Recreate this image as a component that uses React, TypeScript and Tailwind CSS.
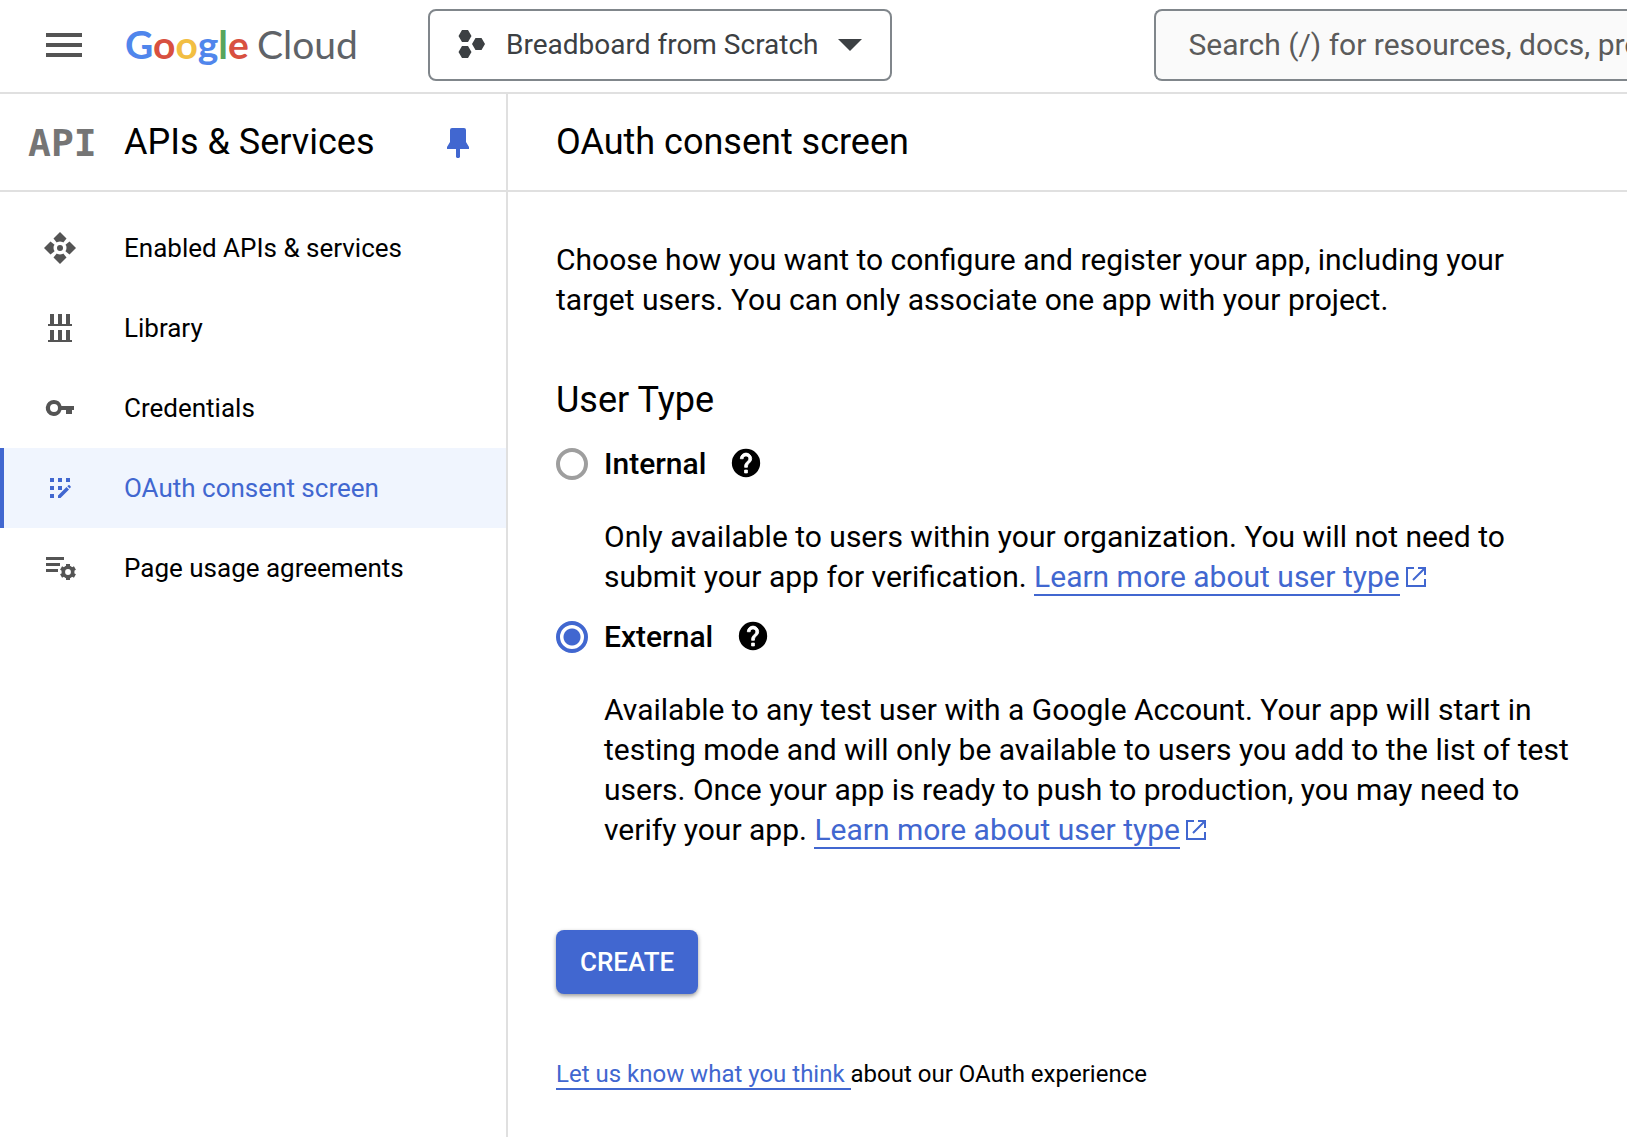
import React from "react";

const navItemBase = "flex h-20 items-center border-l-4 pl-[38px] text-[26px]";

function ApiNodesIcon() {
  return (
    <svg width="36" height="36" viewBox="0 0 36 36" fill="currentColor" aria-hidden="true">
      <mask id="hub">
        <rect width="36" height="36" fill="white" />
        <circle cx="18" cy="18" r="6.500" fill="black" />
      </mask>
      <g mask="url(#hub)">
        <path d="M18 2l6.500 6.500-4 5h-5l-4-5z" />
        <path d="M18 34l6.500-6.500-4-5h-5l-4 5z" />
        <path d="M2 18l6.500-6.500 5 4v5l-5 4z" />
        <path d="M34 18l-6.500-6.500-5 4v5l5 4z" />
      </g>
      <circle cx="18" cy="18" r="3" />
    </svg>
  );
}

function LibraryIcon() {
  return (
    <svg width="36" height="36" viewBox="0 0 36 36" fill="currentColor" aria-hidden="true">
      <path d="M8 4h4v10h4V4h4v10h4V4h4v10h2v2H6v-2h2z" />
      <path d="M8 20h4v10h4V20h4v10h4V20h4v10h2v2H6v-2h2z" />
    </svg>
  );
}

function KeyIcon() {
  return (
    <svg width="36" height="36" viewBox="0 0 36 36" fill="currentColor" aria-hidden="true">
      <path
        fillRule="evenodd"
        d="M12 10a8 8 0 1 0 7.500 10H24v4h6v-4h2v-4H19.500A8 8 0 0 0 12 10zm0 4a4 4 0 1 1 0 8 4 4 0 0 1 0-8z"
      />
    </svg>
  );
}

function ConsentIcon() {
  return (
    <svg width="36" height="36" viewBox="0 0 36 36" fill="currentColor" aria-hidden="true">
      <path d="M8 8h4v4H8zM16 8h4v4h-4zM24 8h4v4h-4zM8 16h4v4H8zM16 16h4v4h-4zM8 24h4v4H8z" />
      <path d="M16 28v-2.500l8.500-8.500 2.500 2.500-8.500 8.500zM25.300 16.200l1-1q.7-.4 1.300 0l1 1q.4.7 0 1.300l-.9 1z" />
    </svg>
  );
}

function AgreementsIcon() {
  return (
    <svg width="36" height="36" viewBox="0 0 36 36" fill="none" stroke="currentColor" aria-hidden="true">
      <path fill="currentColor" stroke="none" d="M4 7h18v3H4zM4 13h14v3H4zM4 19h12v3H4z" />
      <circle cx="26" cy="22" r="4.700" strokeWidth="3.600" />
      <path
        strokeWidth="4"
        d="M26 14v3M26 27v3M19.070 18l2.600 1.500M30.330 24.500l2.600 1.500M19.070 26l2.600-1.500M30.330 19.500l2.600-1.500"
      />
    </svg>
  );
}

function HelpIcon() {
  return (
    <svg width="34" height="34" viewBox="0 0 24 24" aria-hidden="true">
      <circle cx="12" cy="12" r="10" fill="black" />
      <path
        fill="white"
        stroke="white"
        strokeWidth="0.600"
        d="M13 19h-2v-2h2v2zm2.070-7.750l-.9.920C13.450 12.900 13 13.500 13 15h-2v-.5c0-1.100.450-2.100 1.170-2.830l1.240-1.260c.370-.360.590-.860.590-1.410 0-1.100-.9-2-2-2s-2 .9-2 2H8c0-2.210 1.790-4 4-4s4 1.790 4 4c0 .880-.360 1.680-.930 2.250z"
      />
    </svg>
  );
}

function ExternalIcon() {
  return (
    <svg
      className="ml-1.5 inline-block align-baseline"
      width="20"
      height="20"
      viewBox="0 0 20 20"
      fill="none"
      stroke="currentColor"
      strokeWidth="2"
      aria-hidden="true"
    >
      <path d="M8 1H1v18h18v-7M12 1h7v7M19 1L7 13" />
    </svg>
  );
}

function LearnMore() {
  return (
    <a href="#user-type" className="text-[#4167d0]">
      <span className="border-b-2 border-[#4167d0]">Learn more about user type</span>
      <ExternalIcon />
    </a>
  );
}

const NAV = [
  { label: "Enabled APIs & services", Icon: ApiNodesIcon },
  { label: "Library", Icon: LibraryIcon },
  { label: "Credentials", Icon: KeyIcon },
  { label: "OAuth consent screen", Icon: ConsentIcon, active: true },
  { label: "Page usage agreements", Icon: AgreementsIcon },
];

function UserTypeOption({
  id,
  label,
  checked,
  onSelect,
  children,
}: {
  id: string;
  label: string;
  checked: boolean;
  onSelect: () => void;
  children: React.ReactNode;
}) {
  return (
    <div>
      <div className="flex h-10 items-center">
        <input
          type="radio"
          id={id}
          name="user-type"
          checked={checked}
          onChange={onSelect}
          className="size-8 shrink-0 appearance-none rounded-full border-4 border-[#9e9e9e] bg-white checked:border-[#4167d0] checked:bg-[radial-gradient(circle,#4167d0_8px,white_9px)]"
        />
        <label htmlFor={id} className="ml-4 font-medium">
          {label}
        </label>
        <button type="button" aria-label={"About " + label} className="ml-[23px] pb-0.5">
          <HelpIcon />
        </button>
      </div>
      <p className="mt-[33px] pl-12">{children}</p>
    </div>
  );
}

export default function App() {
  const [userType, setUserType] = React.useState("external");

  return (
    <div className="flex min-h-screen flex-col overflow-x-hidden bg-white font-[Roboto,sans-serif] text-black">
      <header className="flex h-[94px] items-center border-b-2 border-[#e0e0e0] pb-0.5">
        <button type="button" aria-label="Main menu" className="ml-[46px] text-[#545454]">
          <svg width="36" height="24" viewBox="0 0 36 24" fill="currentColor" aria-hidden="true">
            <path d="M0 0h36v4H0zM0 10h36v4H0zM0 20h36v4H0z" />
          </svg>
        </button>
        <a
          href="#home"
          aria-label="Google Cloud"
          className="ml-[43px] flex w-[233px] shrink-0 items-baseline gap-2 whitespace-nowrap pb-0.5 font-[Lato,sans-serif]"
        >
          <span className="text-[39px] font-bold">
            <span className="text-[#5086ec]">G</span>
            <span className="text-[#d85040]">o</span>
            <span className="text-[#f2be42]">o</span>
            <span className="text-[#5086ec]">g</span>
            <span className="text-[#58a55c]">l</span>
            <span className="text-[#d85040]">e</span>
          </span>
          <span className="text-[39px] text-[#5f6368]">Cloud</span>
        </a>
        <button
          type="button"
          className="ml-[70px] flex h-18 shrink-0 items-center rounded-lg border-2 border-[#80868b] px-7 text-[28px] text-[#3c4043]"
        >
          <svg width="28" height="30" viewBox="0 0 28 30" fill="currentColor" aria-hidden="true">
            <path d="M4 0h6l3.500 6L10 12H4L.500 6zM4 16h6l3.500 6L10 28H4L.500 22zM17.500 8h6l3.500 6-3.500 6h-6L14 14z" />
          </svg>
          <span className="ml-5 whitespace-nowrap">Breadboard from Scratch</span>
          <svg className="ml-[19px]" width="24" height="12" viewBox="0 0 24 12" fill="currentColor" aria-hidden="true">
            <path d="M0 0h24L12 12z" />
          </svg>
        </button>
        <input
          type="text"
          aria-label="Search"
          placeholder="Search (/) for resources, docs, products, and more"
          className="ml-[262px] h-18 min-w-0 flex-1 rounded-l-lg border-2 border-r-0 border-[#80868b] bg-[#fafafa] pb-0.5 pl-[33px] text-[30px] placeholder:text-[#5b5b5b]"
        />
      </header>

      <div className="flex flex-1">
        <aside className="w-[508px] shrink-0 border-r-2 border-[#e0e0e0]">
          <div className="flex h-[98px] items-center border-b-2 border-[#e0e0e0] pl-[26px] pr-[37px]">
            <svg width="72" height="48" viewBox="0 0 72 48" aria-hidden="true">
              <text
                x="2"
                y="38"
                fontFamily="DejaVu Sans Mono, monospace"
                fontWeight="700"
                fontSize="38"
                fill="#757575"
              >
                API
              </text>
            </svg>
            <h2 className="ml-[26px] flex-1 whitespace-nowrap text-[36px]">APIs &amp; Services</h2>
            <button type="button" aria-label="Unpin menu" className="pt-0.5 text-[#4167d0]">
              <svg width="22" height="30" viewBox="0 0 22 30" fill="currentColor" aria-hidden="true">
                <path d="M5 0h12q2 0 2 2v12l3 5v2h-9v8l-1 1h-2l-1-1v-8H0v-2l3-5V2q0-2 2-2z" />
              </svg>
            </button>
          </div>
          <nav className="pt-4">
            {NAV.map(({ label, Icon, active }) => (
              <a
                key={label}
                href="#nav"
                aria-current={active ? "page" : undefined}
                className={
                  navItemBase + (active ? " border-[#4167d0] bg-[#f0f5fe] text-[#4167d0]" : " border-transparent")
                }
              >
                <span className={active ? "" : "text-[#545454]"}>
                  <Icon />
                </span>
                <span className="ml-[46px]">{label}</span>
              </a>
            ))}
          </nav>
        </aside>

        <main className="min-w-0 flex-1">
          <div className="flex h-[98px] items-center border-b-2 border-[#e0e0e0] pl-12">
            <h1 className="text-[36px]">OAuth consent screen</h1>
          </div>
          <form className="px-12 pt-12 text-[30px] leading-10" onSubmit={(e) => e.preventDefault()}>
            <p className="max-w-[1020px]">
              Choose how you want to configure and register your app, including your target users. You can only
              associate one app with your project.
            </p>
            <h2 className="mt-15 text-[36px]">User Type</h2>
            <div className="mt-6 flex max-w-[1020px] flex-col gap-5">
              <UserTypeOption
                id="internal"
                label="Internal"
                checked={userType === "internal"}
                onSelect={() => setUserType("internal")}
              >
                Only available to users within your organization. You will not need to submit your app for
                verification. <LearnMore />
              </UserTypeOption>
              <UserTypeOption
                id="external"
                label="External"
                checked={userType === "external"}
                onSelect={() => setUserType("external")}
              >
                Available to any test user with a Google Account. Your app will start in testing mode and will only be
                available to users you add to the list of test users. Once your app is ready to push to production, you
                may need to verify your app. <LearnMore />
              </UserTypeOption>
            </div>
            <button
              type="submit"
              className="mt-20 flex h-16 items-center rounded-lg bg-[#4167d0] px-6 text-[26px] font-medium text-white shadow-[0_2px_4px_rgba(0,0,0,0.4)]"
            >
              CREATE
            </button>
            <p className="mt-15 text-[24px]">
              <a href="#feedback" className="whitespace-pre border-b-2 border-[#4167d0] text-[#4167d0]">
                {"Let us know what you think "}
              </a>
              about our OAuth experience
            </p>
          </form>
        </main>
      </div>
    </div>
  );
}
